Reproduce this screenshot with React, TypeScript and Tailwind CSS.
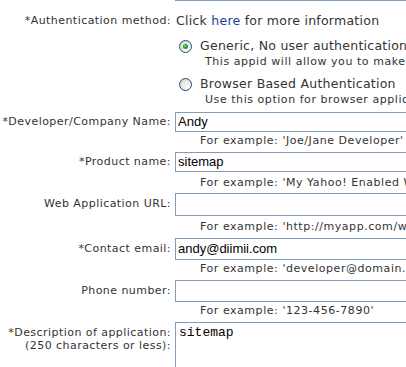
import React from 'react';

function Radio({ checked }: { checked?: boolean }) {
    const id = checked ? 'radio-on' : 'radio-off';
    return (
        <svg width="13" height="13" viewBox="0 0 13 13" className="shrink-0">
            <defs>
                <radialGradient id={id} cx="0.7" cy="0.7" r="0.8">
                    <stop offset="0" stopColor="#ffffff" />
                    <stop offset="1" stopColor="#d8d6cc" />
                </radialGradient>
            </defs>
            <circle cx="6.5" cy="6.5" r="6" fill={`url(#${id})`} stroke="#1c5180" strokeWidth="1" />
            {checked && (
                <>
                    <circle cx="6.5" cy="6.5" r="2.5" fill="#21a121" />
                    <circle cx="6" cy="6" r="1" fill="#7be07b" />
                </>
            )}
        </svg>
    );
}

function Label({ children }: { children: React.ReactNode }) {
    return (
        <div className="w-[171px] shrink-0 text-right text-[11px] tracking-[0.45px] text-[#333] whitespace-nowrap">
            {children}
        </div>
    );
}

function Example({ text, mt }: { text: string; mt: string }) {
    return (
        <div className={`${mt} ml-[200px] h-[14px] leading-[14px] text-[11px] tracking-[0.55px] text-[#333] whitespace-nowrap`}>
            {text}
        </div>
    );
}

function Field({ label, value, h, mt }: { label: string; value: string; h: string; mt: string }) {
    return (
        <div className={`${mt} flex items-center`}>
            <Label>{label}</Label>
            <div
                className={`ml-[4px] ${h} w-[320px] shrink-0 border border-[#7f9db9] bg-white pl-[2px] flex items-center text-[13px] text-black font-['Liberation_Sans',Arial,sans-serif]`}
            >
                {value}
            </div>
        </div>
    );
}

export default function App() {
    return (
        <div className="w-[406px] h-[367px] overflow-hidden bg-white font-['DejaVu_Sans',Verdana,sans-serif]">
            {/* bottom edge of the field above */}
            <div className="ml-[175px] h-px w-[300px] bg-[#7f9db9]" />

            {/* Authentication method */}
            <div className="mt-[11px] flex items-center h-[18px]">
                <Label>*Authentication method:</Label>
                <div className="ml-[5px] text-[12.5px] tracking-[0.25px] text-[#333] whitespace-nowrap">
                    Click <span className="text-[#1b3f94]">here</span> for more information
                </div>
            </div>

            <div className="mt-[7px] ml-[179px] h-[18px] flex items-center gap-[8px] whitespace-nowrap">
                <Radio checked />
                <span className="text-[12.5px] tracking-[0.25px] text-[#333]">Generic, No user authentication required</span>
            </div>
            <div className="ml-[205px] h-[14px] leading-[14px] text-[11px] tracking-[0.55px] text-[#333] whitespace-nowrap">
                This appid will allow you to make calls to services
            </div>

            <div className="mt-[6px] ml-[179px] h-[18px] flex items-center gap-[8px] whitespace-nowrap">
                <Radio />
                <span className="text-[12.5px] tracking-[0.25px] text-[#333]">Browser Based Authentication</span>
            </div>
            <div className="ml-[205px] h-[14px] leading-[14px] text-[11px] tracking-[0.55px] text-[#333] whitespace-nowrap">
                Use this option for browser applications
            </div>

            <Field mt="mt-[5px]" h="h-[20px]" label="*Developer/Company Name:" value="Andy" />
            <Example mt="mt-[2px]" text="For example: 'Joe/Jane Developer'" />

            <Field mt="mt-[4px]" h="h-[20px]" label="*Product name:" value="sitemap" />
            <Example mt="mt-[4px]" text="For example: 'My Yahoo! Enabled Widget'" />

            <Field mt="mt-[3px]" h="h-[23px]" label="Web Application URL:" value="" />
            <Example mt="mt-[4px]" text="For example: 'http://myapp.com/widget'" />

            <Field mt="mt-[4px]" h="h-[22px]" label="*Contact email:" value="andy@diimii.com" />
            <Example mt="mt-[2px]" text="For example: 'developer@domain.com'" />

            <Field mt="mt-[4px]" h="h-[22px]" label="Phone number:" value="" />
            <Example mt="mt-[2px]" text="For example: '123-456-7890'" />

            {/* Description */}
            <div className="mt-[4px] flex items-start">
                <div className="w-[171px] shrink-0 pt-[4px] text-right text-[11px] tracking-[0.45px] leading-[13px] text-[#333] whitespace-nowrap">
                    <div>*Description of application:</div>
                    <div>(250 characters or less):</div>
                </div>
                <div className="ml-[4px] h-[70px] w-[320px] shrink-0 border border-[#7f9db9] bg-white px-[3px] pt-[2px] text-[13px] leading-[16px] text-black font-['Liberation_Mono','Courier_New',monospace]">
                    sitemap
                </div>
            </div>
        </div>
    );
}
